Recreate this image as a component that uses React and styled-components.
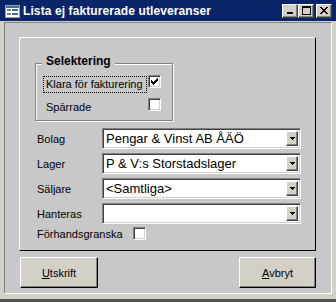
import styled, { createGlobalStyle } from "styled-components";

const GlobalStyle = createGlobalStyle`
  html, body {
    margin: 0;
    padding: 0;
    background: #d4d0c8;
  }
  body {
    font-family: "Liberation Sans", Arial, sans-serif;
    font-size: 11px;
    color: #000;
  }
`;

const FORM_BG = "#c8c8c8";
const FACE = "#d4d0c8";

const Window = styled.div`
  width: 336px;
  height: 302px;
  box-sizing: border-box;
  background: ${FACE};
  border-bottom: 3px solid #505050;
  display: flex;
  flex-direction: column;
  overflow: hidden;
`;

const TitleBar = styled.div`
  flex: none;
  height: 21px;
  background: #0a246a;
  display: flex;
  align-items: center;
  padding: 0 4px 0 4px;
  gap: 3px;
`;

const Title = styled.span`
  flex: 1;
  color: #fff;
  font-weight: bold;
  font-size: 12px;
  letter-spacing: 0.1px;
  white-space: nowrap;
`;

const Caps = styled.div`
  display: flex;
  align-items: center;
`;

const CapButton = styled.div`
  width: 16px;
  height: 14px;
  box-sizing: border-box;
  background: ${FACE};
  border: 1px solid;
  border-color: #fff #404040 #404040 #fff;
  box-shadow: inset -1px -1px #808080;
  display: flex;
  align-items: center;
  justify-content: center;
  margin-left: ${(p) => p.$gap || 0}px;

  svg {
    display: block;
  }
`;

const Client = styled.div`
  flex: none;
  height: 272px;
  margin: 1px 4px 0;
  box-sizing: border-box;
  border: 1px solid;
  border-color: #808080 #fff #fff #808080;
  background: ${FORM_BG};
  padding: 14px 0 0 14px;
`;

const Panel = styled.div`
  width: 297px;
  height: 214px;
  box-sizing: border-box;
  border: 1px solid;
  border-color: #fff #000 #000 #fff;
  padding-top: 25px;
`;

const GroupBox = styled.div`
  position: relative;
  width: 138px;
  height: 58px;
  box-sizing: border-box;
  margin-left: 15px;
  border: 1px solid #808080;
  box-shadow: inset 1px 1px #fff, 1px 1px #fff;
  padding: 11px 0 0 7px;
  display: flex;
  flex-direction: column;
  gap: 5px;
`;

const Legend = styled.span`
  position: absolute;
  top: -10px;
  left: 6px;
  padding: 0 4px;
  background: ${FORM_BG};
  font-weight: bold;
  font-size: 12px;
  line-height: 14px;
`;

const CheckRow = styled.div`
  display: grid;
  grid-template-columns: 104px 13px;
  column-gap: 1px;
  align-items: start;
`;

const CheckLabel = styled.span`
  margin-top: 1px;
  height: 17px;
  box-sizing: border-box;
  border: 1px ${(p) => (p.$focus ? "dotted #000" : "solid transparent")};
  padding-left: 2px;
  line-height: 14px;
  white-space: nowrap;
`;

const Box = styled.span`
  width: 13px;
  height: 13px;
  box-sizing: border-box;
  border: 1px solid;
  border-color: #808080 #fff #fff #808080;
  box-shadow: inset 1px 1px #404040, inset -1px -1px ${FACE};
  background: #fff;
  display: flex;
  align-items: center;
  justify-content: center;

  svg {
    display: block;
  }
`;

const Fields = styled.div`
  margin: 7px 0 0 17px;
  display: grid;
  grid-template-columns: 65px 199px;
  row-gap: 4px;
  align-items: center;
`;

const FieldLabel = styled.span`
  white-space: nowrap;
`;

const Combo = styled.div`
  height: 21px;
  box-sizing: border-box;
  border: 1px solid;
  border-color: #808080 #fff #fff #808080;
  box-shadow: inset 1px 1px #404040, inset -1px -1px ${FACE};
  background: #fff;
  display: flex;
  align-items: center;
  padding: 0 2px 0 3px;
  font-size: 13px;
`;

const ComboText = styled.span`
  flex: 1;
  white-space: nowrap;
  overflow: hidden;
`;

const DropButton = styled.span`
  flex: none;
  width: 12px;
  height: 15px;
  box-sizing: border-box;
  background: ${FACE};
  border: 1px solid;
  border-color: #fff #404040 #404040 #fff;
  box-shadow: inset -1px -1px #808080;
  display: flex;
  align-items: center;
  justify-content: center;
`;

const PreviewRow = styled.div`
  margin: 3px 0 0 17px;
  display: grid;
  grid-template-columns: 96px 13px;
  align-items: center;
`;

const ButtonRow = styled.div`
  width: 297px;
  box-sizing: border-box;
  margin-top: 6px;
  padding-left: 1px;
  display: flex;
  justify-content: space-between;
`;

const PushButton = styled.button`
  width: ${(p) => p.$w}px;
  height: 31px;
  box-sizing: border-box;
  background: ${FACE};
  border: 1px solid;
  border-color: #fff #000 #000 #fff;
  box-shadow: inset -1px -1px #808080;
  font-family: "Liberation Sans", Arial, sans-serif;
  font-size: 11px;
  color: #000;
  padding: 0;
  cursor: default;
`;

const Arrow = () => (
  <svg width="5" height="3" shapeRendering="crispEdges">
    <rect x="0" y="0" width="5" height="1" fill="#000" />
    <rect x="1" y="1" width="3" height="1" fill="#000" />
    <rect x="2" y="2" width="1" height="1" fill="#000" />
  </svg>
);

const Check = () => (
  <svg width="7" height="7" shapeRendering="crispEdges">
    <path
      d="M6 0h1v3h-1zM5 1h1v3h-1zM4 2h1v3h-1zM3 3h1v3h-1zM2 4h1v3h-1zM1 3h1v3h-1zM0 2h1v3h-1z"
      fill="#000"
    />
  </svg>
);

const FormIcon = () => (
  <svg width="16" height="16" shapeRendering="crispEdges">
    <rect x="1" y="2" width="14" height="12" fill="#fff" stroke="#a0a0a0" />
    <rect x="2" y="3" width="13" height="2" fill="#3a6ea5" />
    <rect x="3" y="6" width="4" height="2" fill="#808080" />
    <rect x="8" y="6" width="6" height="2" fill="#3a6ea5" />
    <rect x="3" y="10" width="4" height="2" fill="#808080" />
    <rect x="8" y="10" width="6" height="2" fill="#3a6ea5" />
  </svg>
);

const Field = ({ label, value }) => (
  <>
    <FieldLabel>{label}</FieldLabel>
    <Combo>
      <ComboText>{value}</ComboText>
      <DropButton>
        <Arrow />
      </DropButton>
    </Combo>
  </>
);

export default function App() {
  return (
    <>
      <GlobalStyle />
      <Window>
        <TitleBar>
          <FormIcon />
          <Title>Lista ej fakturerade utleveranser</Title>
          <Caps>
            <CapButton>
              <svg width="8" height="7" shapeRendering="crispEdges">
                <rect x="1" y="5" width="6" height="2" fill="#000" />
              </svg>
            </CapButton>
            <CapButton>
              <svg width="9" height="9" shapeRendering="crispEdges">
                <rect x="0.5" y="0.5" width="8" height="8" fill="none" stroke="#000" />
                <rect x="0" y="1" width="9" height="1" fill="#000" />
              </svg>
            </CapButton>
            <CapButton $gap={2}>
              <svg width="8" height="7" shapeRendering="crispEdges">
                <path
                  d="M0 0h2v1h-2zM6 0h2v1h-2zM1 1h2v1h-2zM5 1h2v1h-2zM2 2h4v1h-4zM3 3h2v1h-2zM2 4h4v1h-4zM1 5h2v1h-2zM5 5h2v1h-2zM0 6h2v1h-2zM6 6h2v1h-2z"
                  fill="#000"
                />
              </svg>
            </CapButton>
          </Caps>
        </TitleBar>
        <Client>
          <Panel>
            <GroupBox>
              <Legend>Selektering</Legend>
              <CheckRow>
                <CheckLabel $focus>Klara för fakturering</CheckLabel>
                <Box>
                  <Check />
                </Box>
              </CheckRow>
              <CheckRow>
                <CheckLabel>Spärrade</CheckLabel>
                <Box />
              </CheckRow>
            </GroupBox>
            <Fields>
              <Field label="Bolag" value="Pengar & Vinst AB ÅÄÖ" />
              <Field label="Lager" value="P & V:s Storstadslager" />
              <Field label="Säljare" value="<Samtliga>" />
              <Field label="Hanteras" value="" />
            </Fields>
            <PreviewRow>
              <FieldLabel>Förhandsgranska</FieldLabel>
              <Box />
            </PreviewRow>
          </Panel>
          <ButtonRow>
            <PushButton $w={78}>
              <u>U</u>tskrift
            </PushButton>
            <PushButton $w={77}>
              <u>A</u>vbryt
            </PushButton>
          </ButtonRow>
        </Client>
      </Window>
    </>
  );
}
